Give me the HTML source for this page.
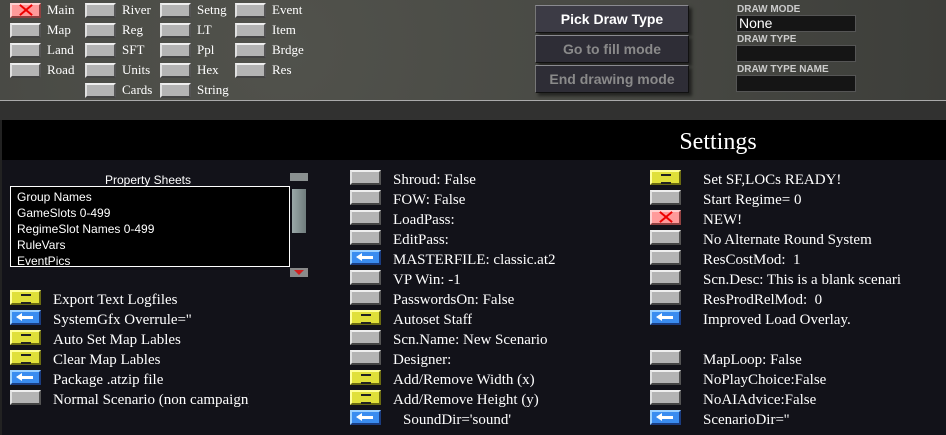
<!DOCTYPE html><html><head><style>
*{margin:0;padding:0;box-sizing:border-box}
body{width:946px;height:435px;overflow:hidden;background:#121219;position:relative;font-family:"Liberation Serif",serif;color:#fff}
.a{position:absolute}
.top{left:0;top:0;width:946px;height:120px;background:radial-gradient(circle at 30% 40%,#51524c,#464742 60%,#3d3e3a)}
.b{position:absolute;width:31px;height:15px;background:#b4b4b4;border-top:2px solid #eee;border-left:2px solid #e0e0e0;border-right:2px solid #555;border-bottom:2px solid #444}
.y{background:#e0e03a;border-top-color:#ffff99;border-left-color:#ffff99;border-right-color:#6a6a10;border-bottom-color:#6a6a10}
.y::after{content:"";position:absolute;left:9px;top:2px;width:10px;height:6px;border-top:2px solid #222;border-bottom:2px solid #222}
.bl{background:#3a8cf0;border-top-color:#9cd0ff;border-left-color:#9cd0ff;border-right-color:#1a3c80;border-bottom-color:#1a3c80}
.bl::after{content:"";position:absolute;left:7px;top:4px;width:14px;height:3px;background:#fff}
.bl::before{content:"";position:absolute;left:4px;top:1px;border-right:6px solid #fff;border-top:4px solid transparent;border-bottom:4px solid transparent}
.r{background:#ff9a9a;border-top-color:#ffd0d0;border-left-color:#ffd0d0;border-right-color:#904040;border-bottom-color:#904040}
.r::before,.r::after{content:"";position:absolute;left:6px;top:4px;width:16px;height:2px;background:#e00;transform:rotate(40deg)}
.r::after{transform:rotate(-40deg)}
.t{position:absolute;font-size:15px;line-height:16px;white-space:nowrap;overflow:hidden;margin-top:2px}
.tt{position:absolute;font-size:13px;line-height:15px;white-space:nowrap}
.db{position:absolute;left:535px;width:154px;height:28px;background:#2e2d36;border-top:1px solid #8a8a90;border-left:1px solid #777;border-right:1px solid #111;border-bottom:1px solid #111;font:bold 14px "Liberation Sans",sans-serif;text-align:center;line-height:26px;color:#8a8a8a;box-shadow:3px 3px 3px rgba(0,0,0,.5)}
.lab{position:absolute;left:737px;font:bold 10px "Liberation Sans",sans-serif;color:#ccc}
.fld{position:absolute;left:736px;width:120px;height:17px;background:#151515;border:1px solid #555;font:14px "Liberation Sans",sans-serif;line-height:15px;padding-left:2px}
.li{font:12px "Liberation Sans",sans-serif;line-height:16px}
</style></head><body>
<div class="a top"></div>
<div class="a" style="left:0;top:100px;width:946px;height:1px;background:#aaa"></div>
<div class="a" style="left:0;top:101px;width:946px;height:19px;background:#313130"></div>
<div class="a" style="left:0;top:120px;width:946px;height:40px;background:#000"></div>
<div class="a" style="left:0;top:120px;width:2px;height:315px;background:#222"></div>
<div class="a" style="left:0;top:128px;width:946px;text-align:center;padding-left:490px;font-size:24px;line-height:28px">Settings</div>

<div class="b r" style="left:10px;top:3px"></div><div class="tt" style="left:47px;top:2px">Main</div>
<div class="b" style="left:10px;top:23px"></div><div class="tt" style="left:47px;top:22px">Map</div>
<div class="b" style="left:10px;top:43px"></div><div class="tt" style="left:47px;top:42px">Land</div>
<div class="b" style="left:10px;top:63px"></div><div class="tt" style="left:47px;top:62px">Road</div>
<div class="b" style="left:85px;top:3px"></div><div class="tt" style="left:122px;top:2px">River</div>
<div class="b" style="left:85px;top:23px"></div><div class="tt" style="left:122px;top:22px">Reg</div>
<div class="b" style="left:85px;top:43px"></div><div class="tt" style="left:122px;top:42px">SFT</div>
<div class="b" style="left:85px;top:63px"></div><div class="tt" style="left:122px;top:62px">Units</div>
<div class="b" style="left:85px;top:83px"></div><div class="tt" style="left:122px;top:82px">Cards</div>
<div class="b" style="left:160px;top:3px"></div><div class="tt" style="left:197px;top:2px">Setng</div>
<div class="b" style="left:160px;top:23px"></div><div class="tt" style="left:197px;top:22px">LT</div>
<div class="b" style="left:160px;top:43px"></div><div class="tt" style="left:197px;top:42px">Ppl</div>
<div class="b" style="left:160px;top:63px"></div><div class="tt" style="left:197px;top:62px">Hex</div>
<div class="b" style="left:160px;top:83px"></div><div class="tt" style="left:197px;top:82px">String</div>
<div class="b" style="left:235px;top:3px"></div><div class="tt" style="left:272px;top:2px">Event</div>
<div class="b" style="left:235px;top:23px"></div><div class="tt" style="left:272px;top:22px">Item</div>
<div class="b" style="left:235px;top:43px"></div><div class="tt" style="left:272px;top:42px">Brdge</div>
<div class="b" style="left:235px;top:63px"></div><div class="tt" style="left:272px;top:62px">Res</div>

<div class="db" style="top:5px;color:#fff;background:#3c3b45">Pick Draw Type</div>
<div class="db" style="top:35px">Go to fill mode</div>
<div class="db" style="top:65px">End drawing mode</div>
<div class="lab" style="top:4px">DRAW MODE</div><div class="fld" style="top:15px">None</div>
<div class="lab" style="top:34px">DRAW TYPE</div><div class="fld" style="top:45px"></div>
<div class="lab" style="top:64px">DRAW TYPE NAME</div><div class="fld" style="top:75px"></div>

<div class="a li" style="left:10px;top:172px;width:296px;text-align:center;padding-right:20px">Property Sheets</div>
<div class="a li" style="left:10px;top:186px;width:280px;height:81px;background:#000;border:1px solid #fff;padding:2px 0 0 6px;overflow:hidden">Group Names<br>GameSlots 0-499<br>RegimeSlot Names 0-499<br>RuleVars<br>EventPics</div>
<div class="a" style="left:290px;top:173px;width:18px;height:8px;background:#8a9090"></div>
<div class="a" style="left:292px;top:189px;width:14px;height:44px;background:linear-gradient(90deg,#9aa8a8,#6f7c7c)"></div>
<div class="a" style="left:290px;top:268px;width:18px;height:9px;background:#8a8a8a"></div>
<div class="a" style="left:294px;top:270px;border-top:5px solid #d02020;border-left:5px solid transparent;border-right:5px solid transparent"></div>

<div class="b y" style="left:10px;top:290px"></div><div class="t" style="left:53px;top:290px">Export Text Logfiles</div>
<div class="b bl" style="left:10px;top:310px"></div><div class="t" style="left:53px;top:310px">SystemGfx Overrule=''</div>
<div class="b y" style="left:10px;top:330px"></div><div class="t" style="left:53px;top:330px">Auto Set Map Lables</div>
<div class="b y" style="left:10px;top:350px"></div><div class="t" style="left:53px;top:350px">Clear Map Lables</div>
<div class="b bl" style="left:10px;top:370px"></div><div class="t" style="left:53px;top:370px">Package .atzip file</div>
<div class="b" style="left:10px;top:390px"></div><div class="t" style="left:53px;top:390px;width:196px">Normal Scenario (non campaign)</div>

<div class="b" style="left:350px;top:170px"></div><div class="t" style="left:393px;top:170px">Shroud: False</div>
<div class="b" style="left:350px;top:190px"></div><div class="t" style="left:393px;top:190px">FOW: False</div>
<div class="b" style="left:350px;top:210px"></div><div class="t" style="left:393px;top:210px">LoadPass:</div>
<div class="b" style="left:350px;top:230px"></div><div class="t" style="left:393px;top:230px">EditPass:</div>
<div class="b bl" style="left:350px;top:250px"></div><div class="t" style="left:393px;top:250px">MASTERFILE: classic.at2</div>
<div class="b" style="left:350px;top:270px"></div><div class="t" style="left:393px;top:270px">VP Win: -1</div>
<div class="b" style="left:350px;top:290px"></div><div class="t" style="left:393px;top:290px">PasswordsOn: False</div>
<div class="b y" style="left:350px;top:310px"></div><div class="t" style="left:393px;top:310px">Autoset Staff</div>
<div class="b" style="left:350px;top:330px"></div><div class="t" style="left:393px;top:330px">Scn.Name: New Scenario</div>
<div class="b" style="left:350px;top:350px"></div><div class="t" style="left:393px;top:350px">Designer:</div>
<div class="b y" style="left:350px;top:370px"></div><div class="t" style="left:393px;top:370px">Add/Remove Width (x)</div>
<div class="b y" style="left:350px;top:390px"></div><div class="t" style="left:393px;top:390px">Add/Remove Height (y)</div>
<div class="b bl" style="left:350px;top:410px"></div><div class="t" style="left:403px;top:410px">SoundDir='sound'</div>

<div class="b y" style="left:650px;top:170px"></div><div class="t" style="left:703px;top:170px">Set SF,LOCs READY!</div>
<div class="b" style="left:650px;top:190px"></div><div class="t" style="left:703px;top:190px">Start Regime= 0</div>
<div class="b r" style="left:650px;top:210px"></div><div class="t" style="left:703px;top:210px">NEW!</div>
<div class="b" style="left:650px;top:230px"></div><div class="t" style="left:703px;top:230px">No Alternate Round System</div>
<div class="b" style="left:650px;top:250px"></div><div class="t" style="left:703px;top:250px">ResCostMod:&nbsp; 1</div>
<div class="b" style="left:650px;top:270px"></div><div class="t" style="left:703px;top:270px;width:198px">Scn.Desc: This is a blank scenario</div>
<div class="b" style="left:650px;top:290px"></div><div class="t" style="left:703px;top:290px">ResProdRelMod:&nbsp; 0</div>
<div class="b bl" style="left:650px;top:310px"></div><div class="t" style="left:703px;top:310px">Improved Load Overlay.</div>
<div class="b" style="left:650px;top:350px"></div><div class="t" style="left:703px;top:350px">MapLoop: False</div>
<div class="b" style="left:650px;top:370px"></div><div class="t" style="left:703px;top:370px">NoPlayChoice:False</div>
<div class="b" style="left:650px;top:390px"></div><div class="t" style="left:703px;top:390px">NoAIAdvice:False</div>
<div class="b bl" style="left:650px;top:410px"></div><div class="t" style="left:703px;top:410px">ScenarioDir=''</div>
</body></html>
